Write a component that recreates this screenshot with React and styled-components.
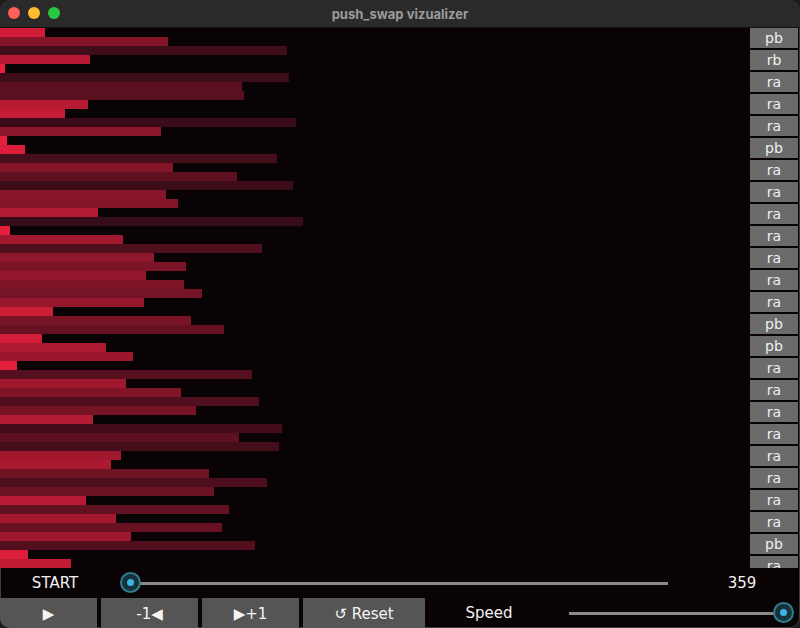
import styled, { createGlobalStyle } from "styled-components";

const GlobalStyle = createGlobalStyle`
  html, body {
    margin: 0;
    padding: 0;
    background: #1c1c1c;
  }
  * {
    box-sizing: border-box;
  }
`;

const BAR_WIDTHS = [
  45, 168, 287, 90, 5, 289, 242, 244, 88, 65, 296, 161, 7, 25, 277, 173, 237, 293, 166, 178,
  98, 303, 10, 123, 262, 154, 186, 146, 184, 202, 144, 53, 191, 224, 42, 106, 133, 17, 252, 126,
  181, 259, 196, 93, 282, 239, 279, 121, 111, 209, 267, 214, 86, 229, 116, 222, 131, 255, 28, 71,
];

const OPS = [
  "pb", "rb", "ra", "ra", "ra", "pb", "ra", "ra", "ra", "ra", "ra", "ra", "ra",
  "pb", "pb", "ra", "ra", "ra", "ra", "ra", "ra", "ra", "ra", "pb", "ra",
];

const Window = styled.div`
  width: 800px;
  height: 628px;
  display: flex;
  flex-direction: column;
  border-radius: 10px;
  overflow: hidden;
  background: #0a0306;
  box-shadow: inset 0 0 0 1px #3c3c3c;
  font-family: "DejaVu Sans", sans-serif;
`;

const TitleBar = styled.div`
  position: relative;
  height: 28px;
  flex: none;
  display: flex;
  align-items: center;
  justify-content: center;
  background: #2a2a2a;
  border-bottom: 1px solid #121212;
`;

const Lights = styled.div`
  position: absolute;
  left: 8px;
  top: 7px;
  display: flex;
  gap: 8px;
`;

const Light = styled.span`
  width: 12px;
  height: 12px;
  border-radius: 50%;
  background: ${(p) => p.color};
`;

const Title = styled.span`
  font-family: Inter, "Liberation Sans", sans-serif;
  font-weight: 700;
  font-size: 13px;
  color: #9b9b9b;
`;

const Main = styled.div`
  height: 540px;
  flex: none;
  display: flex;
`;

const Stack = styled.div`
  flex: 1;
  display: flex;
  flex-direction: column;
`;

const Bar = styled.div`
  height: 9px;
  flex: none;
`;

const OpList = styled.div`
  width: 50px;
  display: flex;
  flex-direction: column;
  gap: 2px;
  overflow: hidden;
`;

const Op = styled.div`
  width: 48px;
  height: 20px;
  flex: none;
  display: flex;
  align-items: center;
  justify-content: center;
  background: #6b6b6b;
  color: #f0f0f0;
  font-size: 14px;
  line-height: 1;
`;

const Controls = styled.div`
  flex: 1;
  display: flex;
  flex-direction: column;
`;

const Row = styled.div`
  height: 30px;
  display: flex;
  align-items: center;
`;

const Label = styled.span`
  width: ${(p) => p.w}px;
  padding-left: ${(p) => p.pad || 0}px;
  flex: none;
  display: flex;
  align-items: center;
  justify-content: center;
  color: #f2f2f2;
  font-size: 15px;
`;

const Slider = styled.div`
  position: relative;
  width: ${(p) => p.w}px;
  height: 30px;
  flex: none;
  display: flex;
  align-items: center;
  padding: 0 ${(p) => p.right}px 0 ${(p) => p.left}px;
`;

const Track = styled.div`
  width: 100%;
  height: 3px;
  background: #8a8a8a;
`;

const Knob = styled.div`
  position: absolute;
  top: 4px;
  left: ${(p) => p.x}px;
  width: 21px;
  height: 21px;
  border-radius: 50%;
  background: #17323a;
  border: 2px solid #2f7f90;
  display: flex;
  align-items: center;
  justify-content: center;

  &::after {
    content: "";
    width: 7px;
    height: 7px;
    border-radius: 50%;
    background: #3cb4e4;
  }
`;

const Buttons = styled.div`
  display: flex;
  gap: 4px;
  height: 30px;
  align-items: stretch;
`;

const Button = styled.button`
  width: ${(p) => p.w}px;
  flex: none;
  border: none;
  margin: 0;
  padding: 1px 0 0;
  background: #555555;
  color: #f4f4f4;
  font-family: "DejaVu Sans", sans-serif;
  font-size: 15px;
`;

export default function App() {
  return (
    <>
      <GlobalStyle />
      <Window>
        <TitleBar>
          <Lights>
            <Light color="#fe5f57" />
            <Light color="#febc2e" />
            <Light color="#28c840" />
          </Lights>
          <Title>push_swap vizualizer</Title>
        </TitleBar>
        <Main>
          <Stack>
            {BAR_WIDTHS.map((w, i) => {
              const t = w / 303;
              const r = Math.round(236 - 182 * t);
              const g = Math.round(32 - 20 * t);
              const b = Math.round(62 - 38 * t);
              return (
                <Bar key={i} style={{ width: w, background: `rgb(${r},${g},${b})` }} />
              );
            })}
          </Stack>
          <OpList>
            {OPS.map((op, i) => (
              <Op key={i}>{op}</Op>
            ))}
          </OpList>
        </Main>
        <Controls>
          <Row>
            <Label w={110}>START</Label>
            <Slider w={560} left={21} right={2}>
              <Track />
              <Knob x={10} />
            </Slider>
            <Label w={130} pad={14}>359</Label>
          </Row>
          <Buttons>
            <Button w={97}>▶</Button>
            <Button w={97}>-1◀</Button>
            <Button w={97}>▶+1</Button>
            <Button w={122}>↺ Reset</Button>
            <Label w={120}>Speed</Label>
            <Slider w={240} left={16} right={9}>
              <Track />
              <Knob x={220} />
            </Slider>
          </Buttons>
        </Controls>
      </Window>
    </>
  );
}
